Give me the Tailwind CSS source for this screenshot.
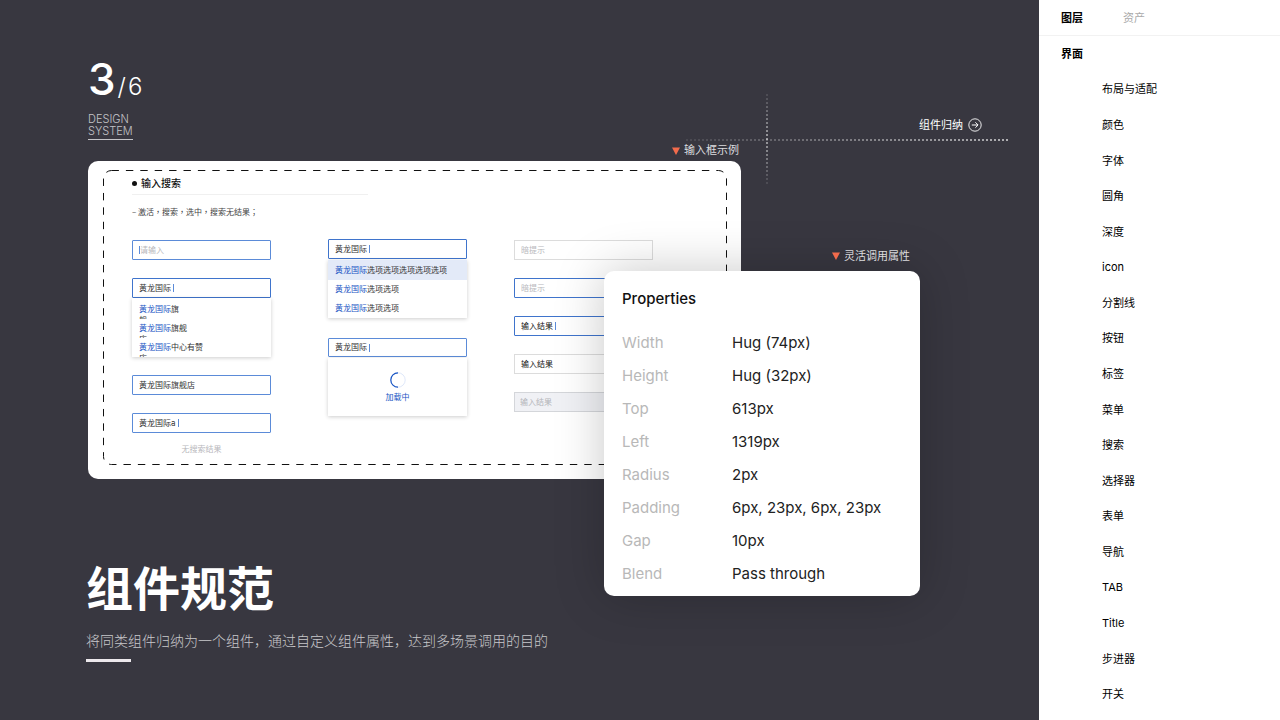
<!DOCTYPE html>
<html lang="zh">
<head>
<meta charset="utf-8">
<meta name="viewport" content="width=device-width, initial-scale=1">
<title>组件规范</title>
<script src="https://cdn.jsdelivr.net/npm/@tailwindcss/browser@4"></script>
</head>
<body class="flex min-h-screen bg-[#383740] font-['Inter','Noto_Sans_CJK_SC',sans-serif] text-white">
<main class="relative min-w-0 flex-1 overflow-hidden">
  <!-- Dotted guide lines -->
  <div class="absolute top-[139px] right-[31px] h-[2px] w-[322px] bg-[repeating-linear-gradient(90deg,#fff_0_2px,transparent_2px_4px)] opacity-60 [mask-image:linear-gradient(90deg,rgba(0,0,0,0.15),#000)]"></div>
  <div class="absolute top-[94px] right-[271px] h-[90px] w-[2px] bg-[repeating-linear-gradient(180deg,#fff_0_2px,transparent_2px_4px)] opacity-50 [mask-image:linear-gradient(180deg,rgba(0,0,0,0.2),#000,rgba(0,0,0,0.2))]"></div>

  <header class="flex items-end justify-between pt-[55px] pr-[57px] pl-[88px]">
    <div>
      <div class="flex items-baseline gap-[2px] leading-[48px]">
        <span class="text-[44px] font-medium">3</span>
        <span class="flex gap-[2px] text-2xl leading-[48px] font-light"><span>/</span><span>6</span></span>
      </div>
      <div class="mt-[2px] block w-fit border-b border-[#c4c4c8] pb-[2px] text-[11px] leading-3 font-light text-[#c4c4c8]">DESIGN<br>SYSTEM</div>
    </div>
    <a href="#components" class="flex items-center gap-[5px] pb-2 text-[11px] leading-[14px]">组件归纳
      <svg class="size-[14px]" viewBox="0 0 14 14" fill="none" stroke="#fff"><circle cx="7" cy="7" r="6.2" stroke-width=".9"/><path d="M3.8 7H10M7.4 4.3 10.1 7 7.4 9.7" stroke-width="1"/></svg>
    </a>
  </header>

  <section class="relative ml-[88px] w-[653px]">
    <div class="flex h-[21px] items-center justify-end gap-1 pr-[2px] text-[11px] text-[#dcdcdf]">
      <svg class="size-2" viewBox="0 0 8 8" fill="#f26b4c"><path d="M0 .5h8L4 8z"/></svg>输入框示例
    </div>
    <div class="relative rounded-[10px] bg-white pt-[15px] pr-11 pb-[21px] pl-11 text-[8px] text-[#333]">
      <svg class="absolute top-[9px] left-[15px] h-[296px] w-[625px]" fill="none"><rect x=".5" y=".5" width="623" height="294" rx="8" stroke="#111" stroke-dasharray="7.4 7"/></svg>
      <h2 class="flex items-center gap-1 text-[10px] leading-[14px] font-medium text-[#111]"><span class="size-[5px] rounded-full bg-[#111]"></span>输入搜索</h2>
      <hr class="mt-1 w-[236px] border-[#f0f0f0]">
      <p lang="zh-TW" class="mt-[11px] font-['Noto_Sans_CJK_TC',sans-serif] leading-3 text-[#444]">– 激活，搜索，选中，搜索无结果；</p>

      <div class="mt-[21px] flex h-[219px] items-start leading-[11px]">
        <div class="w-[139px] pt-px">
          <label class="flex h-5 items-center rounded-[1px] border border-[#5b8bd8] px-[6px]"><span class="h-2 w-px bg-[#5b8bd8]"></span><input aria-label="请输入" placeholder="请输入" class="w-full outline-none placeholder:text-[#b8b8bc]"></label>
          <label class="mt-[18px] flex h-5 items-center gap-[2px] rounded-[1px] border border-[#3f74cc] px-[6px]"><input aria-label="搜索" value="黄龙国际" class="field-sizing-content outline-none"><span class="h-2 w-px bg-[#5b8bd8]"></span></label>
          <ul class="h-[59px] bg-white px-[7px] pt-[2px] shadow-[0_1px_4px_rgba(0,0,0,0.2)]">
            <li class="h-[19px] overflow-hidden pt-1"><span class="text-[#1a56c4]">黄龙国际</span>旗<br>舰</li>
            <li class="h-[19px] overflow-hidden pt-1"><span class="text-[#1a56c4]">黄龙国际</span>旗舰<br>店</li>
            <li class="h-[19px] overflow-hidden pt-1"><span class="text-[#1a56c4]">黄龙国际</span>中心有赞<br>店</li>
          </ul>
          <label class="mt-[18px] flex h-5 items-center rounded-[1px] border border-[#5b8bd8] px-[6px]"><input aria-label="已选" value="黄龙国际旗舰店" class="w-full outline-none"></label>
          <label class="mt-[18px] flex h-5 items-center gap-[2px] rounded-[1px] border border-[#5b8bd8] px-[6px]"><input aria-label="无结果搜索" value="黄龙国际a" class="field-sizing-content outline-none"><span class="h-2 w-px bg-[#5b8bd8]"></span></label>
          <p class="mt-[11px] text-center text-[#b8b8bc]">无搜索结果</p>
        </div>

        <div class="ml-[57px] w-[139px]">
          <label class="flex h-5 items-center gap-[2px] rounded-[1px] border border-[#3f74cc] px-[6px]"><input aria-label="搜索选项" value="黄龙国际" class="field-sizing-content outline-none"><span class="h-2 w-px bg-[#5b8bd8]"></span></label>
          <ul class="mt-px bg-white shadow-[0_1px_4px_rgba(0,0,0,0.2)]">
            <li class="flex h-5 items-center bg-[#e3eaf8] px-[7px]"><span class="text-[#1a56c4]">黄龙国际</span>选项选项选项选项选项</li>
            <li class="flex h-[19px] items-center px-[7px]"><span class="text-[#1a56c4]">黄龙国际</span>选项选项</li>
            <li class="flex h-[19px] items-center px-[7px]"><span class="text-[#1a56c4]">黄龙国际</span>选项选项</li>
          </ul>
          <label class="mt-5 flex h-[19px] items-center gap-[2px] rounded-[1px] border border-[#5b8bd8] px-[6px]"><input aria-label="加载搜索" value="黄龙国际" class="field-sizing-content outline-none"><span class="h-2 w-px bg-[#5b8bd8]"></span></label>
          <div class="mt-px flex h-[58px] flex-col items-center justify-center gap-1 bg-white text-[#1a56c4] shadow-[0_1px_4px_rgba(0,0,0,0.2)]">
            <svg class="size-4" viewBox="0 0 16 16" fill="none"><circle cx="8" cy="8" r="7.2" stroke="#dfe8fa"/><path d="M8 .8a7.2 7.2 0 0 0 0 14.4" stroke="#1a56c4" stroke-width="1.2"/></svg>
            加载中
          </div>
        </div>

        <div class="ml-[47px] flex w-[139px] flex-col gap-[18px] pt-px">
          <label class="flex h-5 items-center border border-[#dcdcdc] px-[6px]"><input aria-label="默认" placeholder="暗提示" class="w-full outline-none placeholder:text-[#b8b8bc]"></label>
          <label class="flex h-5 items-center rounded-[1px] border border-[#3f74cc] px-[6px]"><input aria-label="激活" placeholder="暗提示" class="w-full outline-none placeholder:text-[#b8b8bc]"></label>
          <label class="flex h-5 items-center gap-[2px] rounded-[1px] border border-[#3f74cc] px-[6px] text-[#111]"><input aria-label="输入中" value="输入结果" class="field-sizing-content outline-none"><span class="h-2 w-px bg-[#5b8bd8]"></span></label>
          <label class="flex h-5 items-center border border-[#dcdcdc] px-[6px] text-[#111]"><input aria-label="完成" value="输入结果" class="w-full outline-none"></label>
          <label class="flex h-5 items-center border border-[#d4d6da] bg-[#f0f1f5] px-[5px] text-[#b4b5ba]"><input aria-label="禁用" value="输入结果" disabled class="w-full outline-none"></label>
        </div>
      </div>
    </div>

    <!-- Floating properties panel with its caption -->
    <div class="absolute top-[109px] left-[516px] w-[316px]">
      <div class="flex items-center justify-end gap-1 pr-[10px] text-[11px] leading-[14px] text-[#dcdcdf]">
        <svg class="size-2" viewBox="0 0 8 8" fill="#f26b4c"><path d="M0 .5h8L4 8z"/></svg>灵活调用属性
      </div>
      <div class="mt-2 rounded-[10px] bg-white px-[18px] pt-[18px] pb-[6px] text-[15px] text-[#222] shadow-[0_0_50px_rgba(0,0,0,0.22)]">
        <h3 class="leading-5 font-medium text-[#111]">Properties</h3>
        <dl class="mt-[17px] grid grid-cols-[110px_1fr] leading-[33px]">
          <dt class="text-[#b8b8b8]">Width</dt><dd>Hug (74px)</dd>
          <dt class="text-[#b8b8b8]">Height</dt><dd>Hug (32px)</dd>
          <dt class="text-[#b8b8b8]">Top</dt><dd>613px</dd>
          <dt class="text-[#b8b8b8]">Left</dt><dd>1319px</dd>
          <dt class="text-[#b8b8b8]">Radius</dt><dd>2px</dd>
          <dt class="text-[#b8b8b8]">Padding</dt><dd>6px, 23px, 6px, 23px</dd>
          <dt class="text-[#b8b8b8]">Gap</dt><dd>10px</dd>
          <dt class="text-[#b8b8b8]">Blend</dt><dd>Pass through</dd>
        </dl>
      </div>
    </div>
  </section>

  <section class="mt-20 ml-[86px]">
    <h1 class="text-[47px] leading-[60px] font-bold">组件规范</h1>
    <p class="mt-3 text-sm leading-5 font-light text-[#c8c8cb]">将同类组件归纳为一个组件，通过自定义组件属性，达到多场景调用的目的</p>
    <div class="mt-2 h-[3px] w-[45px] bg-[#ece8ec]"></div>
  </section>
</main>

<aside class="flex min-h-screen w-[241px] flex-col bg-white text-[11px] leading-4 text-black">
  <div class="flex h-9 items-center gap-[40px] border-b border-[#f2f2f2] pl-[22px]">
    <button class="font-bold">图层</button>
    <button class="text-[#aaa]">资产</button>
  </div>
  <nav class="flex flex-1 flex-col pb-2">
    <h2 class="flex flex-1 items-center pl-[22px] font-bold">界面</h2>
    <a href="#n1" class="flex flex-1 items-center pl-[63px]">布局与适配</a>
    <a href="#n2" class="flex flex-1 items-center pl-[63px]">颜色</a>
    <a href="#n3" class="flex flex-1 items-center pl-[63px]">字体</a>
    <a href="#n4" class="flex flex-1 items-center pl-[63px]">圆角</a>
    <a href="#n5" class="flex flex-1 items-center pl-[63px]">深度</a>
    <a href="#n6" class="flex flex-1 items-center pl-[63px]">icon</a>
    <a href="#n7" class="flex flex-1 items-center pl-[63px]">分割线</a>
    <a href="#n8" class="flex flex-1 items-center pl-[63px]">按钮</a>
    <a href="#n9" class="flex flex-1 items-center pl-[63px]">标签</a>
    <a href="#n10" class="flex flex-1 items-center pl-[63px]">菜单</a>
    <a href="#n11" class="flex flex-1 items-center pl-[63px]">搜索</a>
    <a href="#n12" class="flex flex-1 items-center pl-[63px]">选择器</a>
    <a href="#n13" class="flex flex-1 items-center pl-[63px]">表单</a>
    <a href="#n14" class="flex flex-1 items-center pl-[63px]">导航</a>
    <a href="#n15" class="flex flex-1 items-center pl-[63px]">TAB</a>
    <a href="#n16" class="flex flex-1 items-center pl-[63px]">Title</a>
    <a href="#n17" class="flex flex-1 items-center pl-[63px]">步进器</a>
    <a href="#n18" class="flex flex-1 items-center pl-[63px]">开关</a>
  </nav>
</aside>
</body>
</html>
